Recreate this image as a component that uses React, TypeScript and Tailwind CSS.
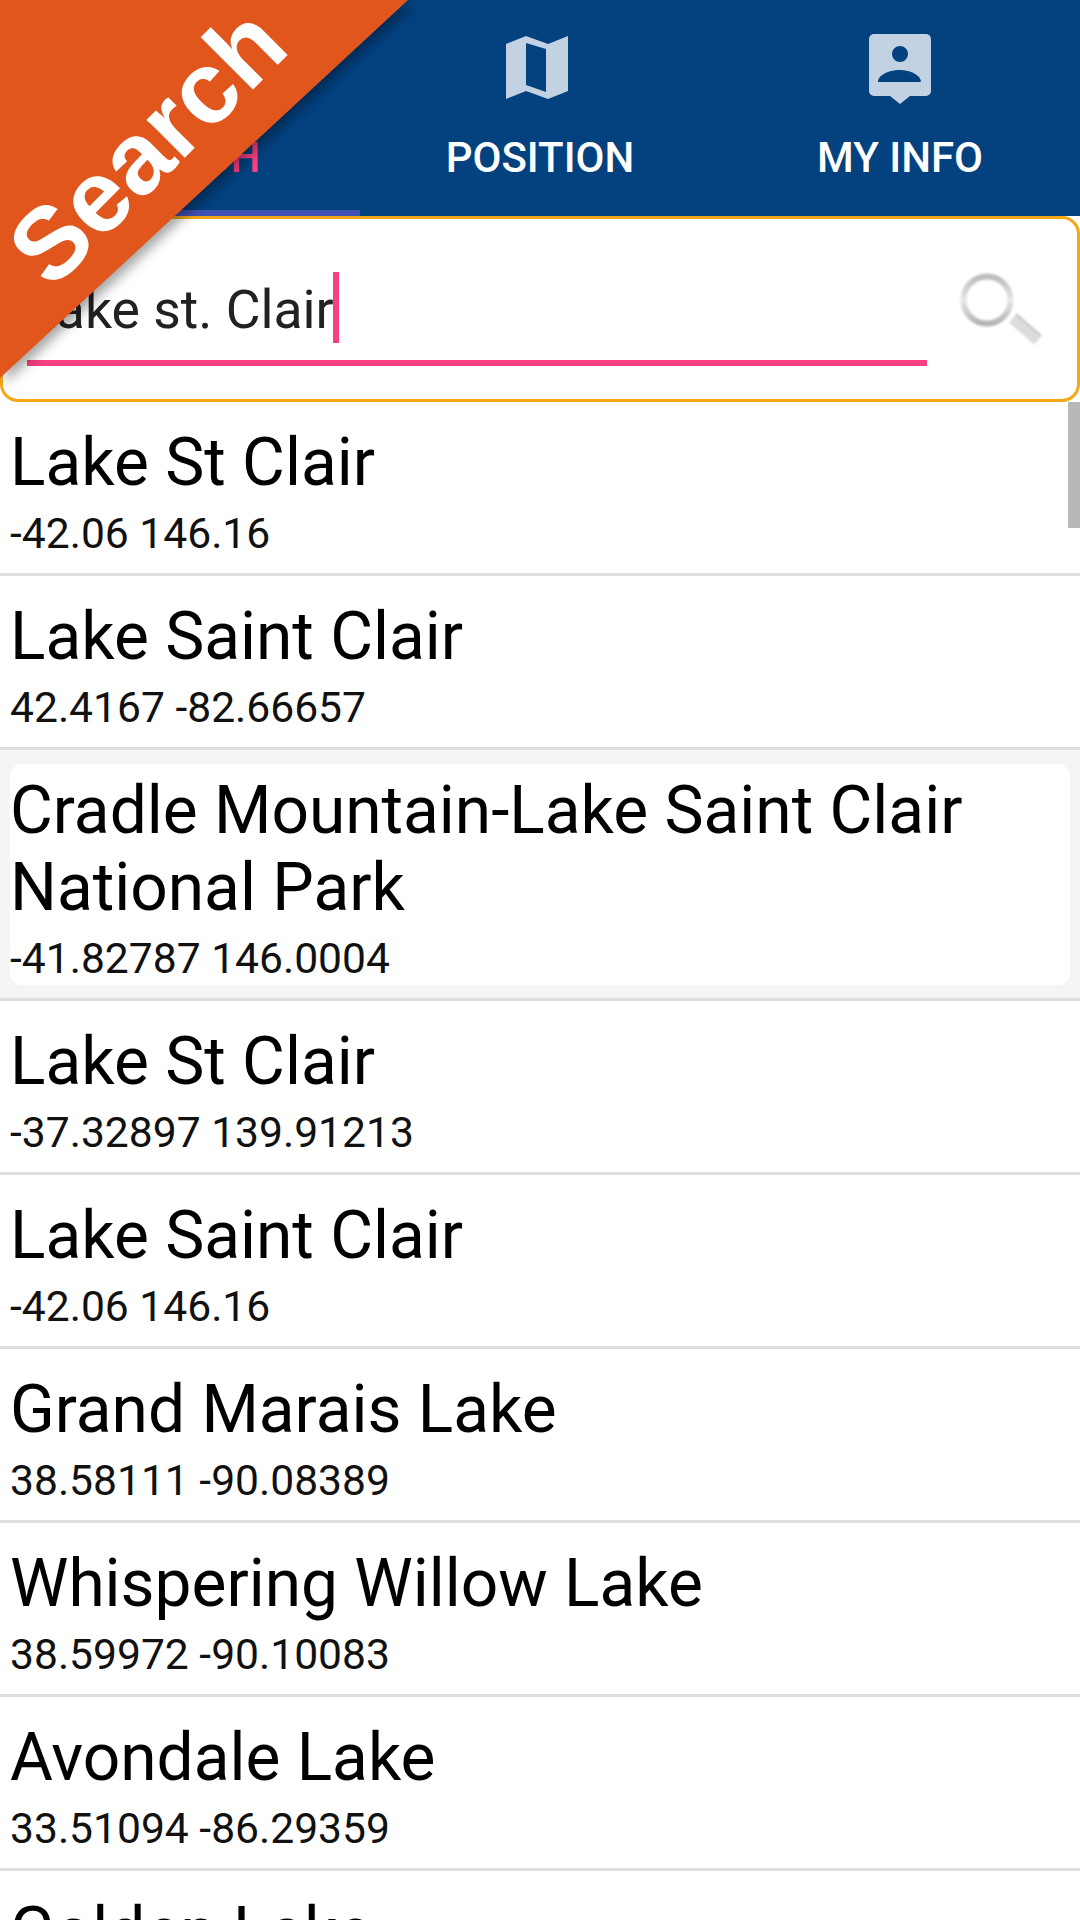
const places = [
  { name: 'Lake St Clair', coords: '-42.06 146.16' },
  { name: 'Lake Saint Clair', coords: '42.4167 -82.66657' },
  { name: 'Cradle Mountain-Lake Saint Clair National Park', coords: '-41.82787 146.0004', selected: true },
  { name: 'Lake St Clair', coords: '-37.32897 139.91213' },
  { name: 'Lake Saint Clair', coords: '-42.06 146.16' },
  { name: 'Grand Marais Lake', coords: '38.58111 -90.08389' },
  { name: 'Whispering Willow Lake', coords: '38.59972 -90.10083' },
  { name: 'Avondale Lake', coords: '33.51094 -86.29359' },
  { name: 'Golden Lake', coords: '33.5 -86.3' },
];

function MapIcon() {
  return (
    <svg width="62" height="63" viewBox="0 0 62 63" className="mr-[6px] mb-[4px] blur-[0.5px]">
      <path
        fillRule="evenodd"
        fill="#c3d2e3"
        d="M0 8 20 0 42 8 62 0V55L42 63 20 55 0 63ZM20 7V49L40 56V13Z"
      />
    </svg>
  );
}

function InfoIcon() {
  return (
    <svg width="62" height="70" viewBox="0 0 62 70" className="blur-[0.5px]">
      <path
        fillRule="evenodd"
        fill="#c3d2e3"
        d="M5 0H57A5 5 0 0 1 62 5V57A5 5 0 0 1 57 62H41L31 70 21 62H5A5 5 0 0 1 0 57V5A5 5 0 0 1 5 0ZM31 12A8 8 0 1 0 31 28 8 8 0 1 0 31 12ZM9 48H52C52 41 41 36 30.500 36 20 36 9 41 9 48Z"
      />
    </svg>
  );
}

function Magnifier() {
  return (
    <svg width="90" height="80" viewBox="0 0 90 80" className="blur-[0.8px]">
      <defs>
        <linearGradient id="ring" x1="0" y1="0" x2="0" y2="1">
          <stop offset="0" stopColor="#bcbcbc" />
          <stop offset="0.5" stopColor="#e8e8e8" />
          <stop offset="1" stopColor="#b4b4b4" />
        </linearGradient>
      </defs>
      <line x1="57" y1="47" x2="82" y2="69" stroke="#dcdcdc" strokeWidth="12" />
      <line x1="60" y1="43" x2="85" y2="65" stroke="#bcbcbc" strokeWidth="1.500" />
      <circle cx="31" cy="29" r="23.500" fill="#fff" stroke="url(#ring)" strokeWidth="6" />
    </svg>
  );
}

function Tab({ label, icon, active }: { label: string; icon: React.ReactNode; active?: boolean }) {
  return (
    <div
      className={`flex h-[216px] flex-col items-center border-b-[6px] pt-[34px] ${
        active ? 'border-[#3f51b5]' : 'border-transparent'
      }`}
    >
      <div className="flex h-[70px] items-center">{icon}</div>
      <div
        className={`mt-[30px] text-[42px] leading-[48px] font-medium ${active ? 'text-[#ff4081]' : 'text-white'}`}
      >
        {label}
      </div>
    </div>
  );
}

function Row({ name, coords, selected }: { name: string; coords: string; selected?: boolean }) {
  return (
    <div className={`border-b-[3px] border-[#dedede] ${selected ? 'bg-[#f5f5f5] px-[10px] pt-[14px] pb-[13px]' : 'pt-[22px]'}`}>
      <div className={`${selected ? 'rounded-xl bg-white pt-[8px] pb-[2px]' : 'h-[149px]'}`}>
        <div className={`text-[65.8px] leading-[77px] text-black ${selected ? '' : 'pl-[10px]'}`}>{name}</div>
        <div className={`mt-[7px] text-[42.6px] leading-[50px] text-[#111] ${selected ? '' : 'pl-[10px]'}`}>{coords}</div>
      </div>
    </div>
  );
}

export default function App() {
  return (
    <div className="relative h-[1920px] w-[1080px] overflow-hidden bg-white font-['Roboto',sans-serif]">
      <div className="grid grid-cols-3 bg-[#03417f]">
        <Tab label="SEARCH" active icon={<div className="h-[62px] w-[62px]" />} />
        <Tab label="POSITION" icon={<MapIcon />} />
        <Tab label="MY INFO" icon={<InfoIcon />} />
      </div>

      <div className="flex h-[186px] items-start rounded-[18px] border-[3px] border-[#f5a716] bg-white pt-[53px] pl-[24px]">
        <div className="w-[900px] border-b-[6px] border-[#f73f82] pb-[17px]">
          <div className="flex h-[71px] items-center text-[53.5px] text-[#222]">
            <span className="mt-[6px]">Lake st. Clair</span>
            <span className="ml-[-1px] h-[71px] w-[6px] bg-[#f73f82]" />
          </div>
        </div>
        <div className="ml-[29px] mt-[-1px]">
          <Magnifier />
        </div>
      </div>

      <div className="relative">
        {places.map((place, i) => (
          <Row key={i} name={place.name} coords={place.coords} selected={place.selected} />
        ))}
        <div className="absolute top-0 right-0 h-[126px] w-[12px] bg-[#b8b8b8]" />
      </div>

      {/* corner ribbon over the tabs */}
      <div className="absolute top-0 left-0 h-[378px] w-[408px] drop-shadow-[5px_5px_6px_rgba(0,0,0,0.35)]">
        <div className="h-full w-full bg-[#e0561d] [clip-path:polygon(0_0,100%_0,0_100%)]" />
        <div className="absolute top-[91px] left-[-53px] w-[400px] -rotate-45 text-center font-['Liberation_Sans',sans-serif] text-[102px] leading-[110px] font-bold text-white">
          Search
        </div>
      </div>
    </div>
  );
}
